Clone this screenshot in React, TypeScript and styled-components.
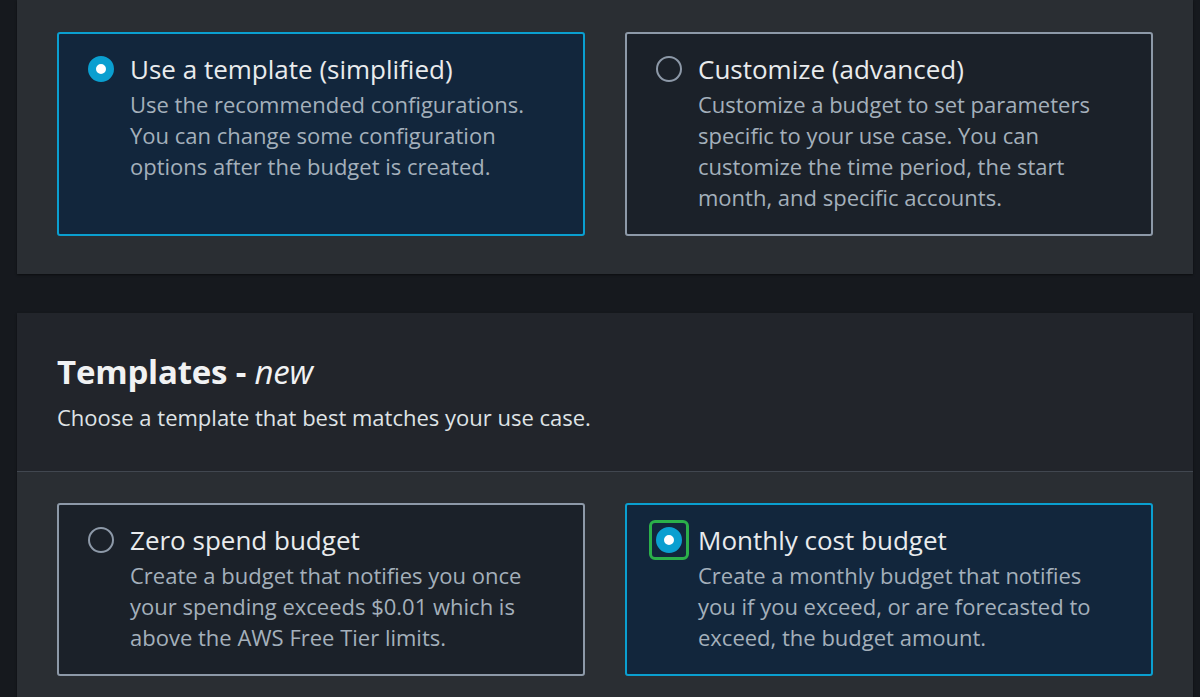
import React from "react";
import styled, { createGlobalStyle } from "styled-components";

const GlobalStyle = createGlobalStyle`
  html, body {
    margin: 0;
    padding: 0;
    background: #16191e;
    font-family: "Open Sans", "Noto Sans", sans-serif;
  }
`;

const Page = styled.div`
  display: flex;
  flex-direction: column;
  gap: 39px;
  padding: 0 7px 40px 17px;
`;

const Panel = styled.section`
  background: #2a2e33;
  box-shadow: 0 1px 2px rgba(0, 0, 0, 0.5);
`;

const PanelHeader = styled.header`
  background: #22252b;
  border-bottom: 1px solid #414750;
  padding: 39px 40px 39px;
`;

const Heading = styled.h2`
  margin: 0;
  font-size: 33px;
  line-height: 40px;
  font-weight: 700;
  color: #f1f2f3;
  letter-spacing: -0.2px;

  em {
    font-weight: 400;
    font-style: italic;
  }
`;

const Subtitle = styled.p`
  margin: 10px 0 0;
  font-size: 22px;
  line-height: 30px;
  color: #dfe3e6;
`;

const Tiles = styled.div<{ $top: number; $bottom: number }>`
  display: grid;
  grid-template-columns: 1fr 1fr;
  gap: 40px;
  padding: ${({ $top }) => $top}px 40px ${({ $bottom }) => $bottom}px;
`;

const Tile = styled.div<{ $selected?: boolean }>`
  display: flex;
  gap: 16px;
  padding: 19px 40px 21px 29px;
  border-radius: 3px;
  border: 2px solid ${({ $selected }) => ($selected ? "#0a9fd0" : "#8d99a8")};
  background: ${({ $selected }) => ($selected ? "#12263c" : "#1b2129")};
`;

const RadioWrap = styled.div<{ $focused?: boolean }>`
  flex: none;
  position: relative;
  width: 26px;
  height: 26px;
  margin-top: 3px;

  &::after {
    content: "";
    display: ${({ $focused }) => ($focused ? "block" : "none")};
    position: absolute;
    inset: -7px;
    border: 3px solid #2bb04a;
    border-radius: 6px;
  }
`;

const Radio = styled.span<{ $checked?: boolean }>`
  display: block;
  box-sizing: border-box;
  width: 26px;
  height: 26px;
  border-radius: 50%;
  border: ${({ $checked }) =>
    $checked ? "8px solid #0a9fd0" : "2.5px solid #8d99a8"};
  background: ${({ $checked }) => ($checked ? "#ffffff" : "transparent")};
`;

const TileBody = styled.div`
  display: flex;
  flex-direction: column;
`;

const TileTitle = styled.div`
  font-size: 26px;
  line-height: 32px;
  color: #e9ebed;
`;

const TileText = styled.div`
  margin-top: 4px;
  font-size: 22px;
  line-height: 31px;
  color: #a4b0bb;
`;

interface Option {
  id: string;
  title: string;
  text: string;
  selected?: boolean;
  focused?: boolean;
}

const modes: Option[] = [
  {
    id: "template",
    title: "Use a template (simplified)",
    text: "Use the recommended configurations. You can change some configuration options after the budget is created.",
    selected: true,
  },
  {
    id: "custom",
    title: "Customize (advanced)",
    text: "Customize a budget to set parameters specific to your use case. You can customize the time period, the start month, and specific accounts.",
  },
];

const templates: Option[] = [
  {
    id: "zero",
    title: "Zero spend budget",
    text: "Create a budget that notifies you once your spending exceeds $0.01 which is above the AWS Free Tier limits.",
  },
  {
    id: "monthly",
    title: "Monthly cost budget",
    text: "Create a monthly budget that notifies you if you exceed, or are forecasted to exceed, the budget amount.",
    selected: true,
    focused: true,
  },
];

const OptionTile: React.FC<{ option: Option }> = ({ option }) => (
  <Tile $selected={option.selected}>
    <RadioWrap $focused={option.focused}>
      <Radio $checked={option.selected} />
    </RadioWrap>
    <TileBody>
      <TileTitle>{option.title}</TileTitle>
      <TileText>{option.text}</TileText>
    </TileBody>
  </Tile>
);

export default function App() {
  return (
    <>
      <GlobalStyle />
      <Page>
        <Panel>
          <Tiles $top={32} $bottom={38}>
            {modes.map((o) => (
              <OptionTile key={o.id} option={o} />
            ))}
          </Tiles>
        </Panel>
        <Panel>
          <PanelHeader>
            <Heading>
              Templates - <em>new</em>
            </Heading>
            <Subtitle>Choose a template that best matches your use case.</Subtitle>
          </PanelHeader>
          <Tiles $top={31} $bottom={38}>
            {templates.map((o) => (
              <OptionTile key={o.id} option={o} />
            ))}
          </Tiles>
        </Panel>
      </Page>
    </>
  );
}
